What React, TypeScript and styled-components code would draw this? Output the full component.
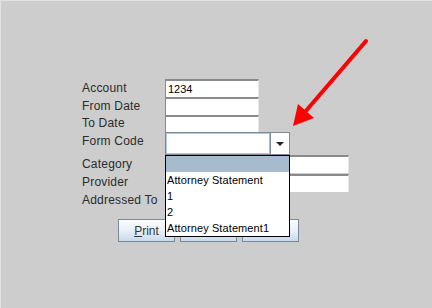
import React from 'react'
import styled, { createGlobalStyle } from 'styled-components'

const GlobalStyle = createGlobalStyle`
    body {
        margin: 0;
        background: #cdcdcd;
        font-family: "Liberation Sans", Arial, sans-serif;
    }
`

const FRAME = styled.div`
    position: relative;
    width: 432px;
    height: 308px;
    box-sizing: border-box;
    background: #cdcdcd;
    box-shadow: inset 1px 1px 0 #e2e2e2;
    padding: 79px 0 0 82px;
`

const FORM = styled.div`
    display: flex;
    flex-direction: column;
`

const ROW = styled.div<{ h: number }>`
    display: flex;
    align-items: flex-start;
    height: ${props => props.h}px;
`

const LABEL = styled.div<{ h: number }>`
    width: 83px;
    height: ${props => props.h}px;
    line-height: ${props => props.h}px;
    font-size: 12px;
    letter-spacing: 0.2px;
    color: #2b2b2b;
    white-space: nowrap;
`

const FIELD = styled.div<{ w: number }>`
    width: ${props => props.w}px;
    height: 18px;
    box-sizing: border-box;
    background: #fff;
    border-top: 2px solid #8a8a8a;
    border-left: 1px solid #8a8a8a;
    border-right: 1px solid #e6e6e6;
    padding-left: 2px;
    font-size: 11px;
    line-height: 16px;
    color: #000;
`

const COMBOWRAP = styled.div`
    position: relative;
    display: flex;
    width: 125px;
    height: 23px;
    box-sizing: border-box;
    border: 1px solid #7a8a99;
    background: #fff;
`

const COMBOTEXT = styled.div`
    flex: 1;
    border: 1px solid #b4c9de;
    border-right: 1px solid #a6bcd2;
`

const COMBOBUTTON = styled.div`
    width: 18px;
    display: flex;
    align-items: center;
    justify-content: center;
    border-left: 1px solid #7a8a99;
    background: #fff;
`

const DOWNARROW = styled.div`
    width: 0;
    height: 0;
    border-left: 4px solid transparent;
    border-right: 4px solid transparent;
    border-top: 4px solid #222;
`

const POPUP = styled.div`
    position: absolute;
    top: 22px;
    left: -1px;
    width: 125px;
    height: 82px;
    box-sizing: border-box;
    border: 1px solid #000;
    background: #fff;
    z-index: 5;
`

const ITEM = styled.div<{ selected?: boolean }>`
    height: 16px;
    line-height: 17px;
    padding-left: 1px;
    font-size: 11px;
    letter-spacing: 0.1px;
    color: #000;
    white-space: nowrap;
    background: ${props => props.selected ? '#a7bbce' : '#fff'};
`

const BUTTONROW = styled.div`
    display: flex;
    gap: 5px;
    margin: 9px 0 0 36px;
`

const BUTTON = styled.div`
    width: 57px;
    height: 23px;
    box-sizing: border-box;
    border: 1px solid #7a8a99;
    background: linear-gradient(#fdfeff, #e6eef6 55%, #c9d9ea);
    display: flex;
    align-items: center;
    justify-content: center;
    font-size: 12px;
    color: #333;

    u {
        text-decoration: underline;
    }
`

const ANNOTATION = styled.svg`
    position: absolute;
    top: 0;
    left: 0;
    pointer-events: none;
    z-index: 10;
`

const options = ['', 'Attorney Statement', '1', '2', 'Attorney Statement1']

export default function App() {
    return (
        <>
            <GlobalStyle />
            <FRAME>
                <FORM>
                    <ROW h={18}>
                        <LABEL h={18}>Account</LABEL>
                        <FIELD w={94}>1234</FIELD>
                    </ROW>
                    <ROW h={18}>
                        <LABEL h={18}>From Date</LABEL>
                        <FIELD w={94} />
                    </ROW>
                    <ROW h={17}>
                        <LABEL h={17}>To Date</LABEL>
                        <FIELD w={94} />
                    </ROW>
                    <ROW h={23}>
                        <LABEL h={18}>Form Code</LABEL>
                        <COMBOWRAP>
                            <COMBOTEXT />
                            <COMBOBUTTON><DOWNARROW /></COMBOBUTTON>
                            <POPUP>
                                {options.map((o, i) => (
                                    <ITEM key={i} selected={i === 0}>{o}</ITEM>
                                ))}
                            </POPUP>
                        </COMBOWRAP>
                    </ROW>
                    <ROW h={19}>
                        <LABEL h={18}>Category</LABEL>
                        <FIELD w={184} />
                    </ROW>
                    <ROW h={18}>
                        <LABEL h={17}>Provider</LABEL>
                        <FIELD w={184} />
                    </ROW>
                    <ROW h={18}>
                        <LABEL h={16}>Addressed To</LABEL>
                        <FIELD w={94} />
                    </ROW>
                </FORM>
                <BUTTONROW>
                    {/* the other two buttons' captions sit under the open list */}
                    <BUTTON><span><u>P</u>rint</span></BUTTON>
                    <BUTTON />
                    <BUTTON />
                </BUTTONROW>
                <ANNOTATION width="432" height="308" viewBox="0 0 432 308">
                    <line x1="366" y1="41" x2="305" y2="112" stroke="#ff0000" strokeWidth="4" strokeLinecap="round" />
                    <polygon points="293,126 298,104 314,118" fill="#ff0000" />
                </ANNOTATION>
            </FRAME>
        </>
    )
}
